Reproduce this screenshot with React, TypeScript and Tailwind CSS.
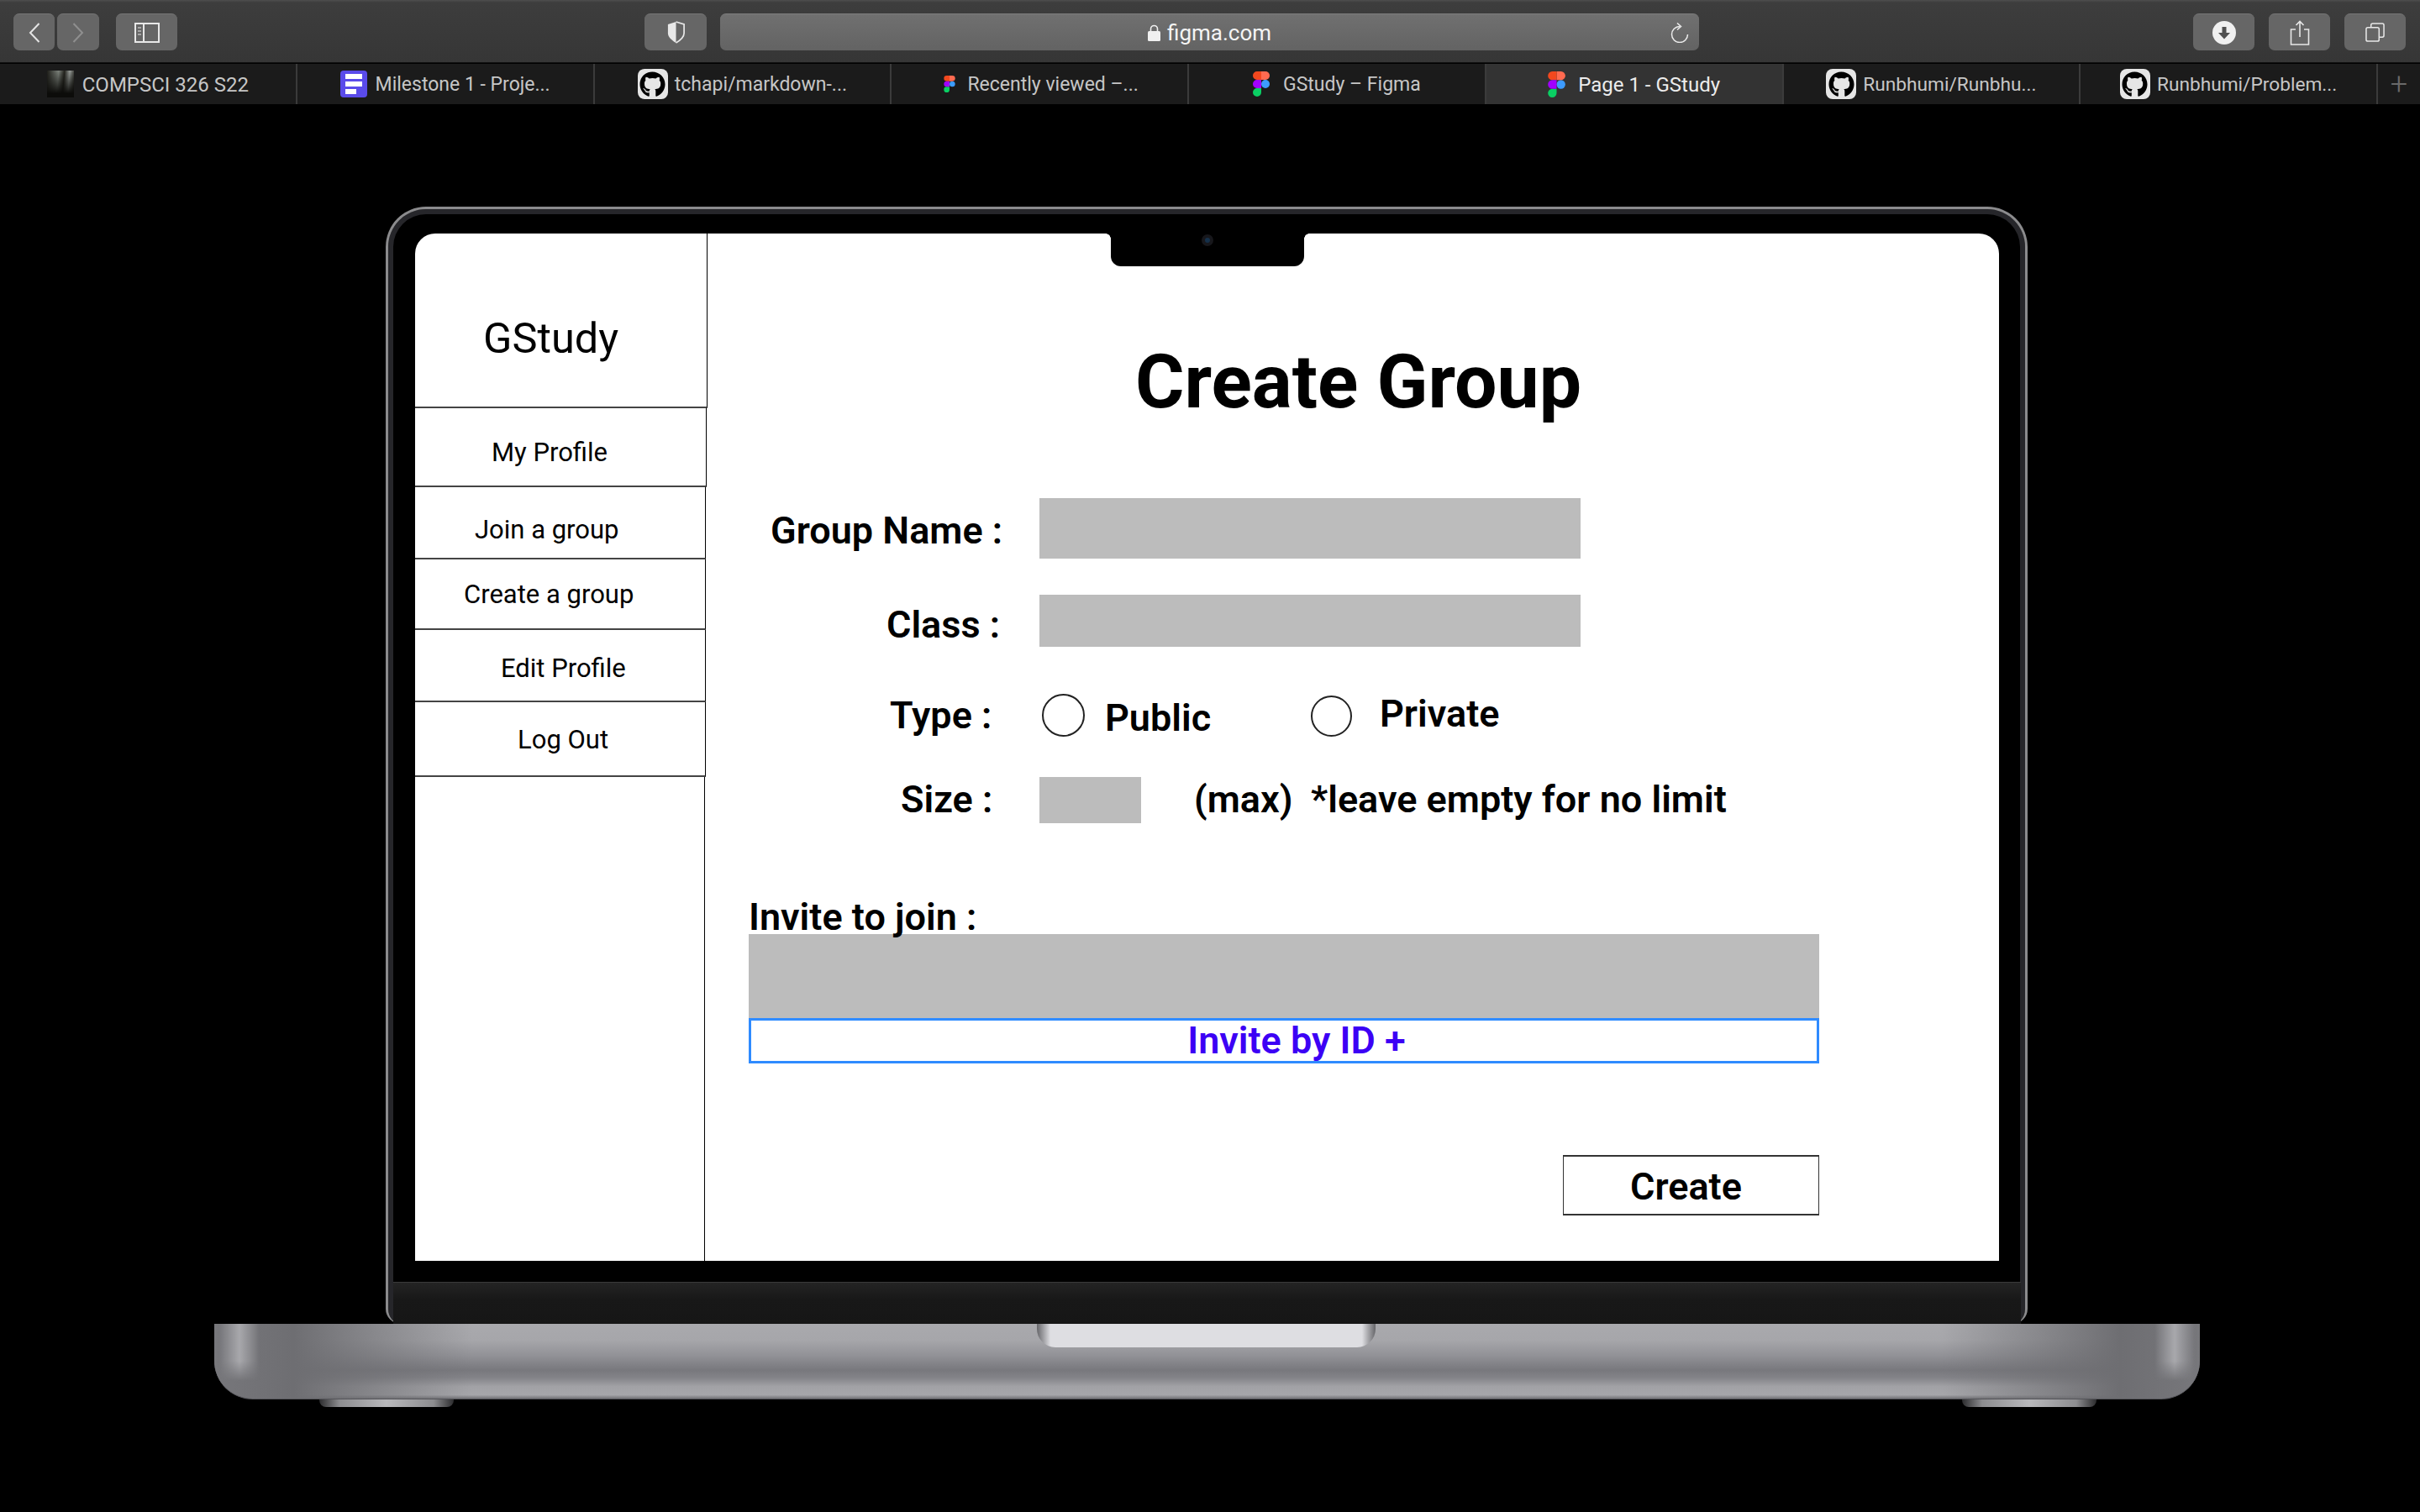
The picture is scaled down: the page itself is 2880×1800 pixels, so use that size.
import { FaGithub } from 'react-icons/fa';

const FigmaLogo = ({ className }: { className: string }) => (
  <svg viewBox="0 0 38 57" className={className}>
    <path d="M19 28.5a9.5 9.5 0 1 1 19 0 9.5 9.5 0 0 1-19 0z" fill="#3d9bff" />
    <path d="M0 47.5A9.5 9.5 0 0 1 9.5 38H19v9.5a9.5 9.5 0 1 1-19 0z" fill="#0acf63" />
    <path d="M19 0v19h9.5a9.5 9.5 0 1 0 0-19H19z" fill="#ff6a50" />
    <path d="M0 9.5A9.5 9.5 0 0 0 9.5 19H19V0H9.5A9.5 9.5 0 0 0 0 9.5z" fill="#f2481e" />
    <path d="M0 28.5A9.5 9.5 0 0 0 9.5 38H19V19H9.5A9.5 9.5 0 0 0 0 28.5z" fill="#a100ff" />
  </svg>
);

const GithubIcon = () => (
  <div className="w-[36px] h-[36px] rounded-[8px] bg-[#e6e6e6] flex items-center justify-center shrink-0">
    <FaGithub className="w-[31px] h-[31px] text-black" />
  </div>
);

const tabs = [
  {
    title: 'COMPSCI 326 S22',
    text: 'text-[24px]',
    gap: 'gap-[10px]',
    icon: <div className="w-[32px] h-[32px] shrink-0 bg-[linear-gradient(180deg,transparent_0%,#0c0c0a_85%),linear-gradient(95deg,#1f1f1a_0%,#7d837c_40%,#23231d_60%,#9a9f9b_78%,#15150f_100%)]" />,
  },
  {
    title: 'Milestone 1 - Proje...',
    text: 'text-[23px]',
    gap: 'gap-[10px]',
    icon: (
      <div className="w-[32px] h-[32px] shrink-0 rounded-[4px] bg-[#5a4bea] flex flex-col justify-center gap-[3px] pl-[6px]">
        <div className="w-[20px] h-[6px] bg-white" />
        <div className="w-[20px] h-[6px] bg-white" />
        <div className="w-[13px] h-[6px] bg-white" />
      </div>
    ),
  },
  { title: 'tchapi/markdown-...', text: 'text-[23px]', gap: 'gap-[8px]', icon: <GithubIcon /> },
  { title: 'Recently viewed –...', text: 'text-[23px]', gap: 'gap-[10px]', icon: <FigmaLogo className="w-[14px] h-[20px] shrink-0 mx-[4px]" /> },
  { title: 'GStudy – Figma', text: 'text-[23px]', gap: 'gap-[16px]', icon: <FigmaLogo className="w-[20px] h-[30px] shrink-0" /> },
  { title: 'Page 1 - GStudy', text: 'text-[24px]', gap: 'gap-[15px]', icon: <FigmaLogo className="w-[21px] h-[31px] shrink-0" />, active: true },
  { title: 'Runbhumi/Runbhu...', text: 'text-[22.7px]', gap: 'gap-[8px]', icon: <GithubIcon /> },
  { title: 'Runbhumi/Problem...', text: 'text-[22.7px]', gap: 'gap-[8px]', icon: <GithubIcon /> },
];

const ToolButton = ({ className, children }: { className: string; children: React.ReactNode }) => (
  <div className={`h-[44px] rounded-[7px] bg-[#666666] border-t border-[#757575] flex items-center justify-center shrink-0 ${className}`}>
    {children}
  </div>
);

const BrowserBar = () => (
  <div className="font-['Roboto',sans-serif]">
    <div className="h-[75px] bg-[linear-gradient(180deg,#4e4e4e_0px,#3d3d3d_3px,#363636_100%)] border-b border-[#111] flex items-start pt-[16px] pl-[16px]">
      <ToolButton className="w-[49px] mr-[3px]">
        <svg viewBox="0 0 14 24" className="w-[14px] h-[24px]" fill="none" stroke="#e4e4e4" strokeWidth="2">
          <path d="M12.5 1 2 12l10.5 11" />
        </svg>
      </ToolButton>
      <ToolButton className="w-[50px] mr-[20px]">
        <svg viewBox="0 0 14 24" className="w-[14px] h-[24px]" fill="none" stroke="#8f8f8f" strokeWidth="2">
          <path d="M1.5 1 12 12 1.5 23" />
        </svg>
      </ToolButton>
      <ToolButton className="w-[73px] mr-[556px]">
        <svg viewBox="0 0 30 24" className="w-[30px] h-[24px]" fill="none" stroke="#e8e8e8" strokeWidth="2">
          <rect x="1" y="1" width="28" height="22" />
          <path d="M11 1v22" />
          <path d="M4 6h4M4 10h4M4 14h4" strokeWidth="1.5" stroke="#bdbdbd" />
        </svg>
      </ToolButton>
      <ToolButton className="w-[74px] mr-[16px]">
        <svg viewBox="0 0 24 28" className="w-[23px] h-[27px]">
          <path d="M12 1 2 4v11c0 5 5 9 10 12V1z" fill="#e8e8e8" />
          <path d="M12 1l10 3v11c0 5-5 9-10 12" fill="none" stroke="#e8e8e8" strokeWidth="1.8" />
        </svg>
      </ToolButton>
      <div className="relative w-[1165px] h-[44px] rounded-[7px] bg-[linear-gradient(180deg,#707070,#636363)] border-t border-[#7c7c7c] flex items-center justify-center gap-[8px] mr-[588px] shrink-0">
        <svg viewBox="0 0 15 20" className="w-[15px] h-[20px]">
          <path d="M3.5 9V5.5a4 4 0 0 1 8 0V9" fill="none" stroke="#f0f0f0" strokeWidth="1.6" />
          <rect x="0" y="8" width="15" height="12" rx="1.5" fill="#f0f0f0" />
        </svg>
        <span className="text-[26px] leading-[30px] text-[#f4f4f4]">figma.com</span>
        <svg viewBox="0 0 22 24" className="absolute right-[12px] top-[10px] w-[22px] h-[24px]" fill="none" stroke="#ececec" strokeWidth="1.5">
          <path d="M11 4.5A9.5 9.5 0 1 0 20.5 14" />
          <path d="M8 0.5 12.5 4.5 8 8.5" />
        </svg>
      </div>
      <ToolButton className="w-[73px] mr-[17px]">
        <svg viewBox="0 0 28 28" className="w-[28px] h-[28px]">
          <circle cx="14" cy="14" r="14" fill="#f0f0f0" />
          <path d="M11.5 7h5v7h4.5l-7 7.5L7 14h4.5z" fill="#505050" />
        </svg>
      </ToolButton>
      <ToolButton className="w-[73px] mr-[17px]">
        <svg viewBox="0 0 24 30" className="w-[24px] h-[30px]" fill="none" stroke="#e8e8e8" strokeWidth="1.6">
          <path d="M7 11H1.5v18h21V11H17" />
          <path d="M12 20V1.5M7.5 6 12 1.5 16.5 6" />
        </svg>
      </ToolButton>
      <ToolButton className="w-[73px]">
        <svg viewBox="0 0 24 24" className="w-[23px] h-[23px]" fill="none" stroke="#e8e8e8" strokeWidth="1.6">
          <rect x="1" y="6" width="16" height="17" rx="2" />
          <path d="M7 6V3a2 2 0 0 1 2-2h12a2 2 0 0 1 2 2v13a2 2 0 0 1-2 2h-4" />
        </svg>
      </ToolButton>
    </div>
    <div className="h-[50px] bg-[#1b1b1b] border-t border-black border-b flex">
      {tabs.map((tab) => (
        <div
          key={tab.title}
          className={`w-[353.75px] shrink-0 flex items-center justify-center border-r-2 border-[#3b3b3b] ${tab.gap} ${tab.active ? 'bg-[#333333] text-[#ececec]' : 'text-[#c6c6c6]'}`}
        >
          {tab.icon}
          <span className={`leading-[30px] pt-[2px] whitespace-nowrap ${tab.text}`}>{tab.title}</span>
        </div>
      ))}
      <div className="flex-1 flex items-center justify-center text-[#6a6a6a] text-[36px] font-light">+</div>
    </div>
  </div>
);

const menu = [
  { label: 'My Profile', row: 'h-[94px] w-[347px] pt-[37px] pl-[91px]' },
  { label: 'Join a group', row: 'h-[86px] w-[346px] pt-[35px] pl-[71px]' },
  { label: 'Create a group', row: 'h-[84px] w-[346px] pt-[26px] pl-[58px]' },
  { label: 'Edit Profile', row: 'h-[86px] w-[346px] pt-[30px] pl-[102px]' },
  { label: 'Log Out', row: 'h-[89px] w-[346px] pt-[29px] pl-[122px]' },
];

const Sidebar = () => (
  <div className="w-[347px] shrink-0 flex flex-col">
    <div className="h-[208px] w-[348px] border-b-2 border-r border-b-[#444] border-r-black pt-[99px] pl-[81px] text-[50.5px] leading-[51px]">
      GStudy
    </div>
    {menu.map((item) => (
      <div key={item.label} className={`border-b-2 border-r border-b-[#444] border-r-black text-[31px] leading-[32px] ${item.row}`}>
        {item.label}
      </div>
    ))}
    <div className="flex-1 w-[345px] border-r border-black" />
  </div>
);

const labelText = 'text-[45px] leading-[46px] font-semibold whitespace-nowrap';

const CreateGroup = () => (
  <div className="flex-1 min-w-0 pt-[133px]">
    <h1 className="ml-[510px] text-[89.5px] leading-[88px] font-bold whitespace-nowrap">Create Group</h1>

    <div className="mt-[94px] flex">
      <div className={`w-[396px] shrink-0 pt-[16px] pl-[76px] ${labelText}`}>Group Name :</div>
      <div className="w-[644px] h-[72px] bg-[#bcbcbc]" />
    </div>

    <div className="mt-[43px] flex">
      <div className={`w-[396px] shrink-0 pt-[13px] pl-[214px] ${labelText}`}>Class :</div>
      <div className="w-[644px] h-[62px] bg-[#bcbcbc]" />
    </div>

    <div className="mt-[56px] flex h-[51px]">
      <div className={`w-[396px] shrink-0 pt-[3px] pl-[218px] ${labelText}`}>Type :</div>
      <div className="ml-[3px] w-[51px] h-[51px] rounded-full border-2 border-[#222] shrink-0" />
      <div className={`ml-[24px] w-[245px] shrink-0 pt-[6px] ${labelText}`}>Public</div>
      <div className="mt-[2px] w-[49px] h-[49px] rounded-full border-2 border-[#222] shrink-0" />
      <div className={`ml-[33px] pt-[1px] ${labelText}`}>Private</div>
    </div>

    <div className="mt-[48px] flex">
      <div className={`w-[396px] shrink-0 pt-[4px] pl-[231px] ${labelText}`}>Size :</div>
      <div className="w-[121px] h-[55px] bg-[#bcbcbc] shrink-0" />
      <div className={`ml-[63px] w-[139px] shrink-0 pt-[4px] ${labelText}`}>(max)</div>
      <div className={`pt-[4px] ${labelText}`}>*leave empty for no limit</div>
    </div>

    <div className={`mt-[89px] ml-[50px] ${labelText}`}>Invite to join :</div>
    <div className="-mt-[3px] ml-[50px] w-[1274px] h-[100px] bg-[#bcbcbc]" />
    <div className={`ml-[50px] w-[1274px] h-[54px] border-[3px] border-[#2f8bff] pt-[1px] pl-[30px] text-center text-[#3c00f5] ${labelText}`}>
      Invite by ID +
    </div>

    <div className={`mt-[109px] ml-[1019px] w-[305px] h-[72px] border-y-2 border-x border-[#333] pt-[13px] pl-[79px] ${labelText}`}>Create</div>
  </div>
);

const Laptop = () => (
  <div className="font-['Roboto',sans-serif] text-black">
    <div className="ml-[459px] mt-[121px] w-[1954px] h-[1330px] rounded-t-[48px] rounded-b-[18px] border-[3px] border-b-0 border-[#8b8b8d] bg-black shadow-[inset_0_0_0_6px_#26262a] pt-[29px] pl-[32px] pr-[31px]">
      <div className="relative h-[1223px] bg-white rounded-t-[24px] flex overflow-hidden">
        <Sidebar />
        <CreateGroup />
        {/* notch */}
        <div className="absolute top-0 left-[828px] w-[230px] h-[39px] bg-black rounded-b-[12px] flex justify-center pt-[1px]">
          <div className="w-[14px] h-[14px] rounded-full bg-[#17171b] flex items-center justify-center">
            <div className="w-[6px] h-[6px] rounded-full bg-[#15304a]" />
          </div>
        </div>
        <div className="absolute top-0 left-[822px] w-[6px] h-[6px] bg-[radial-gradient(circle_at_0_100%,#fff_5.5px,#000_6px)]" />
        <div className="absolute top-0 left-[1058px] w-[6px] h-[6px] bg-[radial-gradient(circle_at_100%_100%,#fff_5.5px,#000_6px)]" />
      </div>
      <div className="mt-[25px] -mx-[26px] h-[50px] border-t border-[#3a3a3a] bg-[linear-gradient(180deg,#242424,#181818_40%,#161616)]" />
    </div>

    <div className="relative ml-[255px] w-[2363px] h-[90px] rounded-b-[46px] overflow-hidden border-b border-[#55555a] bg-[linear-gradient(90deg,#77777b_0,#6e6e72_4%,transparent_13%,transparent_87%,#6e6e72_96%,#77777b_100%),linear-gradient(180deg,#a9a9ad_0%,#a6a6aa_22%,#929297_42%,#78787d_62%,#838388_72%,#a2a2a6_84%,#a6a6aa_95%,#737377_100%)]">
      <div className="absolute top-0 left-[6px] w-[48px] h-[68px] bg-[linear-gradient(90deg,transparent,#a8a8ac_50%,transparent)] [mask-image:linear-gradient(180deg,#000_65%,transparent)]" />
      <div className="absolute top-0 right-[6px] w-[48px] h-[68px] bg-[linear-gradient(90deg,transparent,#a8a8ac_50%,transparent)] [mask-image:linear-gradient(180deg,#000_65%,transparent)]" />
      <div className="absolute top-0 left-[979px] w-[403px] h-[28px] rounded-b-[22px] bg-[linear-gradient(90deg,#66666a_0,#dedee2_4%,#dedee2_96%,#66666a_100%)]" />
    </div>

    <div className="ml-[380px] flex gap-[1795px]">
      <div className="w-[160px] h-[9px] rounded-b-[8px] bg-[linear-gradient(90deg,#2c2c2e,#8d8d90_15%,#b9b9bc_50%,#8d8d90_85%,#2c2c2e)]" />
      <div className="w-[160px] h-[9px] rounded-b-[8px] bg-[linear-gradient(90deg,#2c2c2e,#8d8d90_15%,#b9b9bc_50%,#8d8d90_85%,#2c2c2e)]" />
    </div>
  </div>
);

const App = () => (
  <div className="w-[2880px] h-[1800px] bg-black overflow-hidden">
    <BrowserBar />
    <Laptop />
  </div>
);

export default App;
